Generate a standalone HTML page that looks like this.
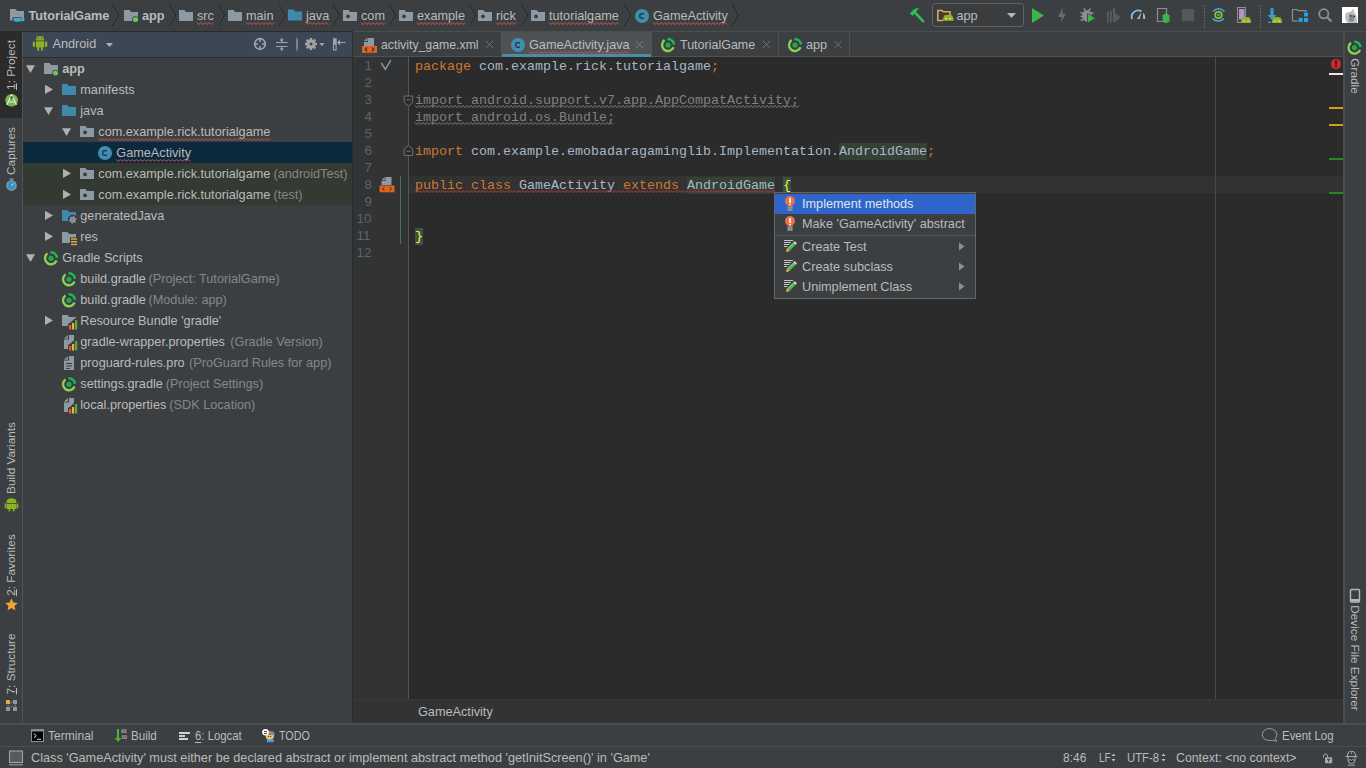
<!DOCTYPE html>
<html><head><meta charset="utf-8">
<style>
*{box-sizing:border-box;margin:0;padding:0}
html,body{width:1366px;height:768px;overflow:hidden;background:#3c3f41;font-family:"Liberation Sans",sans-serif;font-size:12.7px;color:#bbbbbb}
.a{position:absolute}
.t{position:absolute;white-space:pre}
#ic{position:absolute;left:0;top:0}
</style></head><body>
<div class="a" style="left:0px;top:0px;width:1366px;height:31px;background:#3c3f41;"></div>
<div class="a" style="left:0px;top:31px;width:353px;height:1px;background:#2b2b2b;"></div>
<div class="a" style="left:353px;top:31px;width:1013px;height:1px;background:#4b4d4f;"></div>
<div class="a" style="left:0px;top:32px;width:22px;height:691px;background:#3c3f41;"></div>
<div class="a" style="left:0px;top:32px;width:22px;height:86px;background:#2b2b2b;"></div>
<div class="a" style="left:22px;top:32px;width:1px;height:691px;background:#505254;"></div>
<div class="a" style="left:23px;top:32px;width:329px;height:25px;background:#3b4754;"></div>
<div class="a" style="left:23px;top:57px;width:329px;height:1px;background:#2b2b2b;"></div>
<div class="a" style="left:23px;top:58px;width:329px;height:665px;background:#3c3f41;"></div>
<div class="a" style="left:23px;top:142px;width:329px;height:21px;background:#0d293e;"></div>
<div class="a" style="left:23px;top:163px;width:329px;height:42px;background:#323a32;"></div>
<div class="a" style="left:352px;top:32px;width:1px;height:691px;background:#2b2b2b;"></div>
<div class="a" style="left:353px;top:32px;width:990px;height:24px;background:#3c3f41;"></div>
<div class="a" style="left:353px;top:56px;width:990px;height:1px;background:#515151;"></div>
<div class="a" style="left:353px;top:57px;width:990px;height:642px;background:#2b2b2b;"></div>
<div class="a" style="left:353px;top:57px;width:55px;height:642px;background:#313335;"></div>
<div class="a" style="left:408px;top:57px;width:1px;height:642px;background:#555555;"></div>
<div class="a" style="left:409px;top:176px;width:934px;height:17px;background:#323232;"></div>
<div class="a" style="left:1215px;top:57px;width:1px;height:642px;background:#4a4a4a;"></div>
<div class="a" style="left:353px;top:699px;width:990px;height:1px;background:#3a3a3a;"></div>
<div class="a" style="left:353px;top:700px;width:990px;height:23px;background:#313335;"></div>
<div class="a" style="left:1343px;top:32px;width:2px;height:691px;background:#4b4d4f;"></div>
<div class="a" style="left:1345px;top:32px;width:21px;height:691px;background:#3c3f41;"></div>
<div class="a" style="left:0px;top:723px;width:1366px;height:2px;background:#4b4d4f;"></div>
<div class="a" style="left:0px;top:725px;width:1366px;height:21px;background:#3c3f41;"></div>
<div class="a" style="left:0px;top:746px;width:1366px;height:1px;background:#4b4d4f;"></div>
<div class="a" style="left:0px;top:747px;width:1366px;height:21px;background:#3c3f41;"></div>
<div class="t" style="left:28.5px;top:6px;color:#bbbbbb;font-size:12.7px;font-weight:bold;line-height:21px;height:21px;">TutorialGame</div>
<div class="t" style="left:142px;top:6px;color:#bbbbbb;font-size:12.7px;font-weight:bold;line-height:21px;height:21px;">app</div>
<div class="t" style="left:197px;top:6px;color:#bbbbbb;font-size:12.7px;font-weight:normal;line-height:21px;height:21px;">src</div>
<div class="t" style="left:246px;top:6px;color:#bbbbbb;font-size:12.7px;font-weight:normal;line-height:21px;height:21px;">main</div>
<div class="t" style="left:306px;top:6px;color:#bbbbbb;font-size:12.7px;font-weight:normal;line-height:21px;height:21px;">java</div>
<div class="t" style="left:361px;top:6px;color:#bbbbbb;font-size:12.7px;font-weight:normal;line-height:21px;height:21px;">com</div>
<div class="t" style="left:417px;top:6px;color:#bbbbbb;font-size:12.7px;font-weight:normal;line-height:21px;height:21px;">example</div>
<div class="t" style="left:496px;top:6px;color:#bbbbbb;font-size:12.7px;font-weight:normal;line-height:21px;height:21px;">rick</div>
<div class="t" style="left:549px;top:6px;color:#bbbbbb;font-size:12.7px;font-weight:normal;line-height:21px;height:21px;">tutorialgame</div>
<div class="t" style="left:653px;top:6px;color:#bbbbbb;font-size:12.7px;font-weight:normal;line-height:21px;height:21px;">GameActivity</div>
<div class="a" style="left:932px;top:3px;width:92px;height:24px;background:#3a3c3e;border:1px solid #5e6062;border-radius:3px;"></div>
<div class="t" style="left:956.5px;top:6px;color:#bbbbbb;font-size:12.7px;font-weight:normal;line-height:21px;height:21px;">app</div>
<div class="a" style="left:1182px;top:9px;width:12px;height:12px;background:#555758;"></div>
<div class="a" style="left:1342px;top:7px;width:16px;height:16px;background:#ffffff;"></div>
<div class="t" style="left:52.5px;top:33.5px;color:#bbbbbb;font-size:12.7px;font-weight:normal;line-height:21px;height:21px;">Android</div>
<div class="t" style="left:62.3px;top:59px;color:#bbbbbb;font-size:12.7px;font-weight:bold;line-height:21px;height:21px;">app</div>
<div class="t" style="left:80.3px;top:80px;color:#bbbbbb;font-size:12.7px;font-weight:normal;line-height:21px;height:21px;">manifests</div>
<div class="t" style="left:80.3px;top:101px;color:#bbbbbb;font-size:12.7px;font-weight:normal;line-height:21px;height:21px;">java</div>
<div class="t" style="left:98.3px;top:122px;color:#bbbbbb;font-size:12.7px;font-weight:normal;line-height:21px;height:21px;">com.example.rick.tutorialgame</div>
<div class="t" style="left:116.3px;top:143px;color:#bbbbbb;font-size:12.7px;font-weight:normal;line-height:21px;height:21px;">GameActivity</div>
<div class="t" style="left:98.3px;top:164px;color:#bbbbbb;font-size:12.7px;font-weight:normal;line-height:21px;height:21px;">com.example.rick.tutorialgame</div>
<div class="t" style="left:273.5px;top:164px;color:#878787;font-size:12.7px;font-weight:normal;line-height:21px;height:21px;">(androidTest)</div>
<div class="t" style="left:98.3px;top:185px;color:#bbbbbb;font-size:12.7px;font-weight:normal;line-height:21px;height:21px;">com.example.rick.tutorialgame</div>
<div class="t" style="left:273.5px;top:185px;color:#878787;font-size:12.7px;font-weight:normal;line-height:21px;height:21px;">(test)</div>
<div class="t" style="left:80.3px;top:206px;color:#bbbbbb;font-size:12.7px;font-weight:normal;line-height:21px;height:21px;">generatedJava</div>
<div class="t" style="left:80.3px;top:227px;color:#bbbbbb;font-size:12.7px;font-weight:normal;line-height:21px;height:21px;">res</div>
<div class="t" style="left:62.3px;top:248px;color:#bbbbbb;font-size:12.7px;font-weight:normal;line-height:21px;height:21px;">Gradle Scripts</div>
<div class="t" style="left:80.3px;top:269px;color:#bbbbbb;font-size:12.7px;font-weight:normal;line-height:21px;height:21px;">build.gradle</div>
<div class="t" style="left:148.5px;top:269px;color:#878787;font-size:12.7px;font-weight:normal;line-height:21px;height:21px;">(Project: TutorialGame)</div>
<div class="t" style="left:80.3px;top:290px;color:#bbbbbb;font-size:12.7px;font-weight:normal;line-height:21px;height:21px;">build.gradle</div>
<div class="t" style="left:148.5px;top:290px;color:#878787;font-size:12.7px;font-weight:normal;line-height:21px;height:21px;">(Module: app)</div>
<div class="t" style="left:80.3px;top:311px;color:#bbbbbb;font-size:12.7px;font-weight:normal;line-height:21px;height:21px;">Resource Bundle 'gradle'</div>
<div class="t" style="left:80.3px;top:332px;color:#bbbbbb;font-size:12.7px;font-weight:normal;line-height:21px;height:21px;">gradle-wrapper.properties</div>
<div class="t" style="left:230.3px;top:332px;color:#878787;font-size:12.7px;font-weight:normal;line-height:21px;height:21px;">(Gradle Version)</div>
<div class="t" style="left:80.3px;top:353px;color:#bbbbbb;font-size:12.7px;font-weight:normal;line-height:21px;height:21px;">proguard-rules.pro</div>
<div class="t" style="left:189px;top:353px;color:#878787;font-size:12.7px;font-weight:normal;line-height:21px;height:21px;">(ProGuard Rules for app)</div>
<div class="t" style="left:80.3px;top:374px;color:#bbbbbb;font-size:12.7px;font-weight:normal;line-height:21px;height:21px;">settings.gradle</div>
<div class="t" style="left:165.8px;top:374px;color:#878787;font-size:12.7px;font-weight:normal;line-height:21px;height:21px;">(Project Settings)</div>
<div class="t" style="left:80.3px;top:395px;color:#bbbbbb;font-size:12.7px;font-weight:normal;line-height:21px;height:21px;">local.properties</div>
<div class="t" style="left:169.3px;top:395px;color:#878787;font-size:12.7px;font-weight:normal;line-height:21px;height:21px;">(SDK Location)</div>
<div class="a" style="left:502px;top:32px;width:149px;height:24px;background:#4e5254;"></div>
<div class="a" style="left:502px;top:54px;width:149px;height:3px;background:#4a8ba5;"></div>
<div class="a" style="left:501px;top:32px;width:1px;height:24px;background:#515151;"></div>
<div class="a" style="left:651px;top:32px;width:1px;height:24px;background:#515151;"></div>
<div class="a" style="left:778px;top:32px;width:1px;height:24px;background:#515151;"></div>
<div class="a" style="left:849px;top:32px;width:1px;height:24px;background:#515151;"></div>
<div class="t" style="left:380.5px;top:35px;color:#bbbbbb;font-size:12.7px;font-weight:normal;line-height:21px;height:21px;transform:scaleX(0.968);transform-origin:0 0;">activity_game.xml</div>
<div class="t" style="left:529px;top:35px;color:#bbbbbb;font-size:12.7px;font-weight:normal;line-height:21px;height:21px;">GameActivity.java</div>
<div class="t" style="left:679.5px;top:35px;color:#bbbbbb;font-size:12.7px;font-weight:normal;line-height:21px;height:21px;transform:scaleX(0.984);transform-origin:0 0;">TutorialGame</div>
<div class="t" style="left:806px;top:35px;color:#bbbbbb;font-size:12.7px;font-weight:normal;line-height:21px;height:21px;">app</div>
<div class="t" style="left:364.5px;top:57px;color:#606366;font-size:13.333px;font-weight:normal;line-height:17px;height:17px;font-family:"Liberation Mono",monospace;">1</div>
<div class="t" style="left:364.5px;top:74px;color:#606366;font-size:13.333px;font-weight:normal;line-height:17px;height:17px;font-family:"Liberation Mono",monospace;">2</div>
<div class="t" style="left:364.5px;top:91px;color:#606366;font-size:13.333px;font-weight:normal;line-height:17px;height:17px;font-family:"Liberation Mono",monospace;">3</div>
<div class="t" style="left:364.5px;top:108px;color:#606366;font-size:13.333px;font-weight:normal;line-height:17px;height:17px;font-family:"Liberation Mono",monospace;">4</div>
<div class="t" style="left:364.5px;top:125px;color:#606366;font-size:13.333px;font-weight:normal;line-height:17px;height:17px;font-family:"Liberation Mono",monospace;">5</div>
<div class="t" style="left:364.5px;top:142px;color:#606366;font-size:13.333px;font-weight:normal;line-height:17px;height:17px;font-family:"Liberation Mono",monospace;">6</div>
<div class="t" style="left:364.5px;top:159px;color:#606366;font-size:13.333px;font-weight:normal;line-height:17px;height:17px;font-family:"Liberation Mono",monospace;">7</div>
<div class="t" style="left:364.5px;top:176px;color:#606366;font-size:13.333px;font-weight:normal;line-height:17px;height:17px;font-family:"Liberation Mono",monospace;">8</div>
<div class="t" style="left:364.5px;top:193px;color:#606366;font-size:13.333px;font-weight:normal;line-height:17px;height:17px;font-family:"Liberation Mono",monospace;">9</div>
<div class="t" style="left:356.5px;top:210px;color:#606366;font-size:13.333px;font-weight:normal;line-height:17px;height:17px;font-family:"Liberation Mono",monospace;">10</div>
<div class="t" style="left:356.5px;top:227px;color:#606366;font-size:13.333px;font-weight:normal;line-height:17px;height:17px;font-family:"Liberation Mono",monospace;">11</div>
<div class="t" style="left:356.5px;top:244px;color:#606366;font-size:13.333px;font-weight:normal;line-height:17px;height:17px;font-family:"Liberation Mono",monospace;">12</div>
<div class="a" style="left:408px;top:57px;width:1px;height:642px;background:#555555;"></div>
<div class="a" style="left:399.5px;top:176px;width:1px;height:68px;background:#4b6f66;"></div>
<div class="t" style="left:415px;top:58px;font-family:'Liberation Mono',monospace;font-size:13.333px;line-height:17px;height:17px"><span style="color:#cc7832;">package </span><span style="color:#a9b7c6;">com.example.rick.tutorialgame</span><span style="color:#cc7832;">;</span></div>
<div class="t" style="left:415px;top:92px;font-family:'Liberation Mono',monospace;font-size:13.333px;line-height:17px;height:17px"><span style="color:#808080;">import android.support.v7.app.AppCompatActivity;</span></div>
<div class="t" style="left:415px;top:109px;font-family:'Liberation Mono',monospace;font-size:13.333px;line-height:17px;height:17px"><span style="color:#808080;">import android.os.Bundle;</span></div>
<div class="t" style="left:415px;top:143px;font-family:'Liberation Mono',monospace;font-size:13.333px;line-height:17px;height:17px"><span style="color:#cc7832;">import </span><span style="color:#a9b7c6;">com.example.emobadaragaminglib.Implementation.</span><span style="color:#a9b7c6;background:#344134;display:inline-block;height:17px">AndroidGame</span><span style="color:#cc7832;">;</span></div>
<div class="t" style="left:415px;top:177px;font-family:'Liberation Mono',monospace;font-size:13.333px;line-height:17px;height:17px"><span style="color:#cc7832;">public class </span><span style="color:#a9b7c6;">GameActivity </span><span style="color:#cc7832;">extends </span><span style="color:#a9b7c6;background:#344134;display:inline-block;height:17px">AndroidGame</span><span style="color:#a9b7c6;"> </span><span style="color:#ffef28;background:#3b514d;display:inline-block;height:17px">{</span></div>
<div class="t" style="left:415px;top:228px;font-family:'Liberation Mono',monospace;font-size:13.333px;line-height:17px;height:17px"><span style="color:#ffef28;background:#3b514d;display:inline-block;height:17px">}</span></div>
<div class="a" style="left:1329px;top:73px;width:14px;height:2px;background:#e8e8e8;"></div>
<div class="a" style="left:1329px;top:107px;width:14px;height:2px;background:#d69d1d;"></div>
<div class="a" style="left:1329px;top:124px;width:14px;height:2px;background:#d69d1d;"></div>
<div class="a" style="left:1329px;top:158px;width:14px;height:1.5px;background:#1f8a1f;"></div>
<div class="a" style="left:1329px;top:192px;width:14px;height:1.5px;background:#1f8a1f;"></div>
<div class="t" style="left:418px;top:702px;color:#bbbbbb;font-size:12.7px;font-weight:normal;line-height:21px;height:21px;">GameActivity</div>
<div class="t" style="left:11px;top:65.4px;line-height:14px;height:14px;font-size:11.8px;color:#bbbbbb;transform:translate(-50%,-50%) rotate(-90deg);"><u style="text-decoration-thickness:1px;text-underline-offset:1px">1</u>: Project</div>
<div class="t" style="left:11px;top:151.2px;line-height:14px;height:14px;font-size:11.8px;color:#bbbbbb;transform:translate(-50%,-50%) rotate(-90deg);">Captures</div>
<div class="t" style="left:11px;top:457.5px;line-height:14px;height:14px;font-size:11.8px;color:#bbbbbb;transform:translate(-50%,-50%) rotate(-90deg);">Build Variants</div>
<div class="t" style="left:11px;top:564.5px;line-height:14px;height:14px;font-size:11.8px;color:#bbbbbb;transform:translate(-50%,-50%) rotate(-90deg);"><u style="text-decoration-thickness:1px;text-underline-offset:1px">2</u>: Favorites</div>
<div class="t" style="left:11px;top:663.5px;line-height:14px;height:14px;font-size:11.8px;color:#bbbbbb;transform:translate(-50%,-50%) rotate(-90deg);"><u style="text-decoration-thickness:1px;text-underline-offset:1px">7</u>: Structure</div>
<div class="t" style="left:1355px;top:75.6px;line-height:14px;height:14px;font-size:11.8px;color:#bbbbbb;transform:translate(-50%,-50%) rotate(90deg);">Gradle</div>
<div class="t" style="left:1355px;top:657.5px;line-height:14px;height:14px;font-size:11.8px;color:#bbbbbb;transform:translate(-50%,-50%) rotate(90deg);">Device File Explorer</div>
<div class="t" style="left:48.3px;top:726px;color:#bbbbbb;font-size:12.7px;font-weight:normal;line-height:21px;height:21px;transform:scaleX(0.949);transform-origin:0 0;">Terminal</div>
<div class="t" style="left:131.3px;top:726px;color:#bbbbbb;font-size:12.7px;font-weight:normal;line-height:21px;height:21px;transform:scaleX(0.914);transform-origin:0 0;">Build</div>
<div class="t" style="left:195px;top:726px;color:#bbbbbb;font-size:12.7px;font-weight:normal;line-height:21px;height:21px;transform:scaleX(0.895);transform-origin:0 0;"><u style="text-decoration-thickness:1px;text-underline-offset:1.5px">6</u>: Logcat</div>
<div class="t" style="left:279px;top:726px;color:#bbbbbb;font-size:12.7px;font-weight:normal;line-height:21px;height:21px;transform:scaleX(0.843);transform-origin:0 0;">TODO</div>
<div class="t" style="left:1282px;top:726px;color:#bbbbbb;font-size:12.7px;font-weight:normal;line-height:21px;height:21px;transform:scaleX(0.903);transform-origin:0 0;">Event Log</div>
<div class="t" style="left:31px;top:748px;color:#bbbbbb;font-size:12.7px;font-weight:normal;line-height:21px;height:21px;">Class 'GameActivity' must either be declared abstract or implement abstract method 'getInitScreen()' in 'Game'</div>
<div class="t" style="left:1063px;top:748px;color:#bbbbbb;font-size:12.7px;font-weight:normal;line-height:21px;height:21px;transform:scaleX(0.943);transform-origin:0 0;">8:46</div>
<div class="t" style="left:1098.5px;top:748px;color:#bbbbbb;font-size:12.7px;font-weight:normal;line-height:21px;height:21px;transform:scaleX(0.78);transform-origin:0 0;">LF</div>
<div class="t" style="left:1127.3px;top:748px;color:#bbbbbb;font-size:12.7px;font-weight:normal;line-height:21px;height:21px;transform:scaleX(0.893);transform-origin:0 0;">UTF-8</div>
<div class="t" style="left:1175.5px;top:748px;color:#bbbbbb;font-size:12.7px;font-weight:normal;line-height:21px;height:21px;transform:scaleX(0.971);transform-origin:0 0;">Context: &lt;no context&gt;</div>
<div class="a" style="left:774px;top:192px;width:202px;height:107px;background:#3c3f41;border:1px solid #646667;"></div>
<div class="a" style="left:775px;top:194px;width:200px;height:20px;background:#2f65ca;"></div>
<div class="a" style="left:775px;top:235px;width:200px;height:1px;background:#555759;"></div>
<div class="t" style="left:802px;top:194px;color:#dfe6ee;font-size:12.7px;font-weight:normal;line-height:21px;height:21px;">Implement methods</div>
<div class="t" style="left:802px;top:214px;color:#bbbbbb;font-size:12.7px;font-weight:normal;line-height:21px;height:21px;">Make 'GameActivity' abstract</div>
<div class="t" style="left:802px;top:237px;color:#bbbbbb;font-size:12.7px;font-weight:normal;line-height:21px;height:21px;">Create Test</div>
<div class="t" style="left:802px;top:257px;color:#bbbbbb;font-size:12.7px;font-weight:normal;line-height:21px;height:21px;">Create subclass</div>
<div class="t" style="left:802px;top:277px;color:#bbbbbb;font-size:12.7px;font-weight:normal;line-height:21px;height:21px;">Unimplement Class</div>
<svg id="ic" width="1366" height="768" viewBox="0 0 1366 768"><path d="M10 9h5.5l1.5 2h7v9.5h-14z" fill="#8e9aa3"/>
<path d="M12.5 17.3h9.5v2.2q0 3 -3 3h-3.5q-3 0 -3 -3z" fill="#3c3f41"/><path d="M13.5 18h7.5v1.7q0 2 -2 2h-3.5q-2 0 -2 -2z" fill="#3fa7d6"/><path d="M21 18.6h2q1.2 0 1.2 1t-1.2 1h-2.5" fill="none" stroke="#3fa7d6" stroke-width="1.1"/>
<polyline points="111.2,4.5 117.7,15.25 111.2,26" fill="none" stroke="#4c4f51" stroke-width="1"/>
<polyline points="112,4.5 118.5,15.25 112,26" fill="none" stroke="#2a2c2d" stroke-width="1.3"/>
<path d="M124 10h5.5l1.5 2h7v9h-14z" fill="#8e9aa3"/>
<circle cx="135.5" cy="19.5" r="3.3" fill="#3c3f41"/><circle cx="135.5" cy="19.5" r="2.6" fill="#6ac45a"/>
<polyline points="168.2,4.5 174.7,15.25 168.2,26" fill="none" stroke="#4c4f51" stroke-width="1"/>
<polyline points="169,4.5 175.5,15.25 169,26" fill="none" stroke="#2a2c2d" stroke-width="1.3"/>
<path d="M179 10h5.5l1.5 2h7v9h-14z" fill="#8e9aa3"/>
<polyline points="197,22.5 199.0,24.5 201.0,22.5 203.0,24.5 205.0,22.5 207.0,24.5 209.0,22.5 211.0,24.5 213.0,22.5" fill="none" stroke="#d25252" stroke-width="1"/>
<polyline points="217.2,4.5 223.7,15.25 217.2,26" fill="none" stroke="#4c4f51" stroke-width="1"/>
<polyline points="218,4.5 224.5,15.25 218,26" fill="none" stroke="#2a2c2d" stroke-width="1.3"/>
<path d="M228 10h5.5l1.5 2h7v9h-14z" fill="#8e9aa3"/>
<polyline points="246,22.5 248.0,24.5 250.0,22.5 252.0,24.5 254.0,22.5 256.0,24.5 258.0,22.5 260.0,24.5 262.0,22.5 264.0,24.5 266.0,22.5 268.0,24.5 270.0,22.5 272.0,24.5 274.0,22.5" fill="none" stroke="#d25252" stroke-width="1"/>
<polyline points="277.7,4.5 284.2,15.25 277.7,26" fill="none" stroke="#4c4f51" stroke-width="1"/>
<polyline points="278.5,4.5 285.0,15.25 278.5,26" fill="none" stroke="#2a2c2d" stroke-width="1.3"/>
<path d="M288 9.5h5.5l1.5 2h7v9h-14z" fill="#3f8aa8"/>
<polyline points="306,22.5 308.0,24.5 310.0,22.5 312.0,24.5 314.0,22.5 316.0,24.5 318.0,22.5 320.0,24.5 322.0,22.5 324.0,24.5 326.0,22.5 328.0,24.5" fill="none" stroke="#d25252" stroke-width="1"/>
<polyline points="331.7,4.5 338.2,15.25 331.7,26" fill="none" stroke="#4c4f51" stroke-width="1"/>
<polyline points="332.5,4.5 339.0,15.25 332.5,26" fill="none" stroke="#2a2c2d" stroke-width="1.3"/>
<path d="M343 10h5.5l1.5 2h7v9h-14z" fill="#8e9aa3"/>
<circle cx="348" cy="16.4" r="1.9" fill="#3a3d3f"/>
<polyline points="361,22.5 363.0,24.5 365.0,22.5 367.0,24.5 369.0,22.5 371.0,24.5 373.0,22.5 375.0,24.5 377.0,22.5 379.0,24.5 381.0,22.5 383.0,24.5 385.0,22.5" fill="none" stroke="#d25252" stroke-width="1"/>
<polyline points="388.2,4.5 394.7,15.25 388.2,26" fill="none" stroke="#4c4f51" stroke-width="1"/>
<polyline points="389,4.5 395.5,15.25 389,26" fill="none" stroke="#2a2c2d" stroke-width="1.3"/>
<path d="M399 10h5.5l1.5 2h7v9h-14z" fill="#8e9aa3"/>
<circle cx="404" cy="16.4" r="1.9" fill="#3a3d3f"/>
<polyline points="417,22.5 419.0,24.5 421.0,22.5 423.0,24.5 425.0,22.5 427.0,24.5 429.0,22.5 431.0,24.5 433.0,22.5 435.0,24.5 437.0,22.5 439.0,24.5 441.0,22.5 443.0,24.5 445.0,22.5 447.0,24.5 449.0,22.5 451.0,24.5 453.0,22.5 455.0,24.5 457.0,22.5 459.0,24.5 461.0,22.5 463.0,24.5 465.0,22.5" fill="none" stroke="#d25252" stroke-width="1"/>
<polyline points="468.2,4.5 474.7,15.25 468.2,26" fill="none" stroke="#4c4f51" stroke-width="1"/>
<polyline points="469,4.5 475.5,15.25 469,26" fill="none" stroke="#2a2c2d" stroke-width="1.3"/>
<path d="M478 10h5.5l1.5 2h7v9h-14z" fill="#8e9aa3"/>
<circle cx="483" cy="16.4" r="1.9" fill="#3a3d3f"/>
<polyline points="496,22.5 498.0,24.5 500.0,22.5 502.0,24.5 504.0,22.5 506.0,24.5 508.0,22.5 510.0,24.5 512.0,22.5 514.0,24.5 516.0,22.5" fill="none" stroke="#d25252" stroke-width="1"/>
<polyline points="520.2,4.5 526.7,15.25 520.2,26" fill="none" stroke="#4c4f51" stroke-width="1"/>
<polyline points="521,4.5 527.5,15.25 521,26" fill="none" stroke="#2a2c2d" stroke-width="1.3"/>
<path d="M531 10h5.5l1.5 2h7v9h-14z" fill="#8e9aa3"/>
<circle cx="536" cy="16.4" r="1.9" fill="#3a3d3f"/>
<polyline points="549,22.5 551.0,24.5 553.0,22.5 555.0,24.5 557.0,22.5 559.0,24.5 561.0,22.5 563.0,24.5 565.0,22.5 567.0,24.5 569.0,22.5 571.0,24.5 573.0,22.5 575.0,24.5 577.0,22.5 579.0,24.5 581.0,22.5 583.0,24.5 585.0,22.5 587.0,24.5 589.0,22.5 591.0,24.5 593.0,22.5 595.0,24.5 597.0,22.5 599.0,24.5 601.0,22.5 603.0,24.5 605.0,22.5 607.0,24.5 609.0,22.5 611.0,24.5 613.0,22.5 615.0,24.5 617.0,22.5 619.0,24.5" fill="none" stroke="#d25252" stroke-width="1"/>
<polyline points="623.2,4.5 629.7,15.25 623.2,26" fill="none" stroke="#4c4f51" stroke-width="1"/>
<polyline points="624,4.5 630.5,15.25 624,26" fill="none" stroke="#2a2c2d" stroke-width="1.3"/>
<circle cx="642" cy="16" r="7" fill="#3d8fb0"/>
<path d="M644 13.8h-2.6q-1.6 0 -1.6 1.6v1.2q0 1.6 1.6 1.6h2.6" fill="none" stroke="#2b3a40" stroke-width="1.5"/>
<polyline points="653,22.5 655.0,24.5 657.0,22.5 659.0,24.5 661.0,22.5 663.0,24.5 665.0,22.5 667.0,24.5 669.0,22.5 671.0,24.5 673.0,22.5 675.0,24.5 677.0,22.5 679.0,24.5 681.0,22.5 683.0,24.5 685.0,22.5 687.0,24.5 689.0,22.5 691.0,24.5 693.0,22.5 695.0,24.5 697.0,22.5 699.0,24.5 701.0,22.5 703.0,24.5 705.0,22.5 707.0,24.5 709.0,22.5 711.0,24.5 713.0,22.5 715.0,24.5 717.0,22.5 719.0,24.5 721.0,22.5 723.0,24.5 725.0,22.5 727.0,24.5" fill="none" stroke="#d25252" stroke-width="1"/>
<polyline points="730.9000000000001,4.5 737.4000000000001,15.25 730.9000000000001,26" fill="none" stroke="#4c4f51" stroke-width="1"/>
<polyline points="731.7,4.5 738.2,15.25 731.7,26" fill="none" stroke="#2a2c2d" stroke-width="1.3"/>
<path d="M909.8 13.6l3.8 -3.9q2.5 -2 5.2 -1.7l-1.6 2.6 -4.5 5.2z" fill="#2fbf52"/><path d="M914.5 12.2l8.6 9" stroke="#2fbf52" stroke-width="2.6" stroke-linecap="round"/>
<path d="M937 10.5h5l1.3 1.3h6.7v4" fill="none" stroke="#e5a54a" stroke-width="1.6"/><path d="M937.8 10.5v10h5.2" fill="none" stroke="#e5a54a" stroke-width="1.6"/>
<path d="M943 20.8v-1.2q0 -4.8 5.25 -4.8t5.25 4.8v1.2z" fill="#97b324"/>
<circle cx="946.15" cy="18.8" r=".7" fill="#fff"/><circle cx="950.35" cy="18.8" r=".7" fill="#fff"/>
<path d="M944.5 14.8l1 1.6M952.0 14.8l-1 1.6" stroke="#97b324" stroke-width=".8"/>
<path d="M1007 13h9l-4.5 5z" fill="#b5b5b5"/>
<path d="M1032 8v15l12 -7.5z" fill="#3ab54a"/>
<path d="M1062.8 7.6l-4.8 9.4h3.6l-0.5 5.5 4.6 -8.8h-3.4z" fill="#6b6b6b"/>
<ellipse cx="1087" cy="16" rx="5" ry="5.8" fill="#8e8e8e"/><path d="M1083.5 8.5l2.3 2.5M1090.5 8.5l-2.3 2.5M1080.5 13h2.5M1080.5 16.5h2.5M1080.5 20h2.5M1091 13h2.5" stroke="#8e8e8e" stroke-width="1.4"/>
<path d="M1087.5 13.3v9.7l8 -4.85z" fill="#3ab54a" stroke="#3c3f41" stroke-width=".8"/>
<path d="M1107 12h1.8v10.5h-1.8zM1110 11h1.8v11.5h-1.8zM1113 8h2v14h-2z" fill="#5a5a5a"/><path d="M1114.8 12.5v9.5l5.8 -4.8z" fill="#5a5a5a"/>
<path d="M1132 19a6.5 6.5 0 0 1 9.5 -7.6" fill="none" stroke="#7fc4f0" stroke-width="1.8"/><path d="M1143 12.7a6.5 6.5 0 0 1 2 6.3h-1.8" fill="#b5b5b5"/><path d="M1137 19l4.5 -7 -1.8 7z" fill="#b5b5b5"/>
<path d="M1157.5 8.5h9v13h-9z" fill="none" stroke="#8e8e8e" stroke-width="1.2"/>
<path d="M1166 13.5q-3 0 -3 3.2v3q0 3.3 3 3.3t3 -3.3v-3q0 -3.2 -3 -3.2z" fill="#3ab54a"/><path d="M1162 16h8.2M1162 18.5h8.2M1162 21h8.2" stroke="#3ab54a" stroke-width="1"/>
<rect x="1203.9" y="5.5" width="1.2" height="1.2" fill="#777"/>
<rect x="1203.9" y="8.5" width="1.2" height="1.2" fill="#777"/>
<rect x="1203.9" y="11.5" width="1.2" height="1.2" fill="#777"/>
<rect x="1203.9" y="14.5" width="1.2" height="1.2" fill="#777"/>
<rect x="1203.9" y="17.5" width="1.2" height="1.2" fill="#777"/>
<rect x="1203.9" y="20.5" width="1.2" height="1.2" fill="#777"/>
<rect x="1203.9" y="23.5" width="1.2" height="1.2" fill="#777"/>
<rect x="1203.9" y="26.5" width="1.2" height="1.2" fill="#777"/>
<rect x="1259.9" y="5.5" width="1.2" height="1.2" fill="#777"/>
<rect x="1259.9" y="8.5" width="1.2" height="1.2" fill="#777"/>
<rect x="1259.9" y="11.5" width="1.2" height="1.2" fill="#777"/>
<rect x="1259.9" y="14.5" width="1.2" height="1.2" fill="#777"/>
<rect x="1259.9" y="17.5" width="1.2" height="1.2" fill="#777"/>
<rect x="1259.9" y="20.5" width="1.2" height="1.2" fill="#777"/>
<rect x="1259.9" y="23.5" width="1.2" height="1.2" fill="#777"/>
<rect x="1259.9" y="26.5" width="1.2" height="1.2" fill="#777"/>
<path d="M1213 11.5q5.5 -5.5 11.5 0" fill="none" stroke="#3bb0e6" stroke-width="1.6"/><path d="M1224 18.5q-5.5 5.5 -11.5 0" fill="none" stroke="#3bb0e6" stroke-width="1.6"/>
<circle cx="1218.5" cy="15" r="3.3" fill="none" stroke="#9cc629" stroke-width="1.6"/><circle cx="1218.5" cy="15" r="1.5" fill="#2fb070"/>
<path d="M1237.5 7.5h8v15h-8z" fill="none" stroke="#8e8e8e" stroke-width="1.1"/><rect x="1239" y="9" width="5.5" height="10.5" fill="#b791cc"/>
<path d="M1241 23v-1.2q0 -4.8 5.0 -4.8t5.0 4.8v1.2z" fill="#97b324"/>
<circle cx="1244.0" cy="21" r=".7" fill="#fff"/><circle cx="1248.0" cy="21" r=".7" fill="#fff"/>
<path d="M1242.5 17l1 1.6M1249.5 17l-1 1.6" stroke="#97b324" stroke-width=".8"/>
<path d="M1270.5 8h3v7h3l-4.5 5 -4.5 -5h3z" fill="#3c9bd4"/><path d="M1268 22.3h3" stroke="#3bb0e6" stroke-width="1.2"/>
<path d="M1272 23v-1.2q0 -4.8 5.0 -4.8t5.0 4.8v1.2z" fill="#97b324"/>
<circle cx="1275.0" cy="21" r=".7" fill="#fff"/><circle cx="1279.0" cy="21" r=".7" fill="#fff"/>
<path d="M1273.5 17l1 1.6M1280.5 17l-1 1.6" stroke="#97b324" stroke-width=".8"/>
<path d="M1292.5 21v-11.5h4.5l1.2 1.2h8v1.3" fill="none" stroke="#8e8e8e" stroke-width="1.2"/><path d="M1292.5 21h5" stroke="#8e8e8e" stroke-width="1.2"/>
<rect x="1304" y="12.5" width="4" height="4" fill="#1fa5e6"/><rect x="1298.5" y="18" width="4" height="4" fill="#1fa5e6"/><rect x="1304" y="18" width="4" height="4" fill="#1fa5e6"/>
<circle cx="1323.8" cy="13.8" r="4.6" fill="none" stroke="#8e8e8e" stroke-width="1.8"/><path d="M1327 17l4.5 4.5" stroke="#8e8e8e" stroke-width="2.2"/>
<path d="M1345.5 13.5q2 -2 5 -1.5l3 -3.5 .8 4q2.5 2.5 2.5 6v4.5h-9q-3.5 -2.5 -2.3 -9.5z" fill="#bdbdbd"/><path d="M1349 14.5q2.5 -1 5 1q1 3 -.5 5.5q-2.5 1.5 -4.5 0z" fill="#8a8a8a"/><circle cx="1350.8" cy="16" r=".8" fill="#222"/><circle cx="1354.2" cy="16.4" r=".8" fill="#222"/>
<path d="M35.9 40.6h8.3q0 -4.4 -4.15 -4.4t-4.15 4.4z" fill="#8cb21f"/>
<circle cx="38.3" cy="38.6" r=".6" fill="#3b4754"/><circle cx="41.8" cy="38.6" r=".6" fill="#3b4754"/>
<path d="M36.8 35.2l1 1.5M43.3 35.2l-1 1.5" stroke="#8cb21f" stroke-width=".9"/>
<rect x="35.9" y="41.3" width="8.3" height="6.2" fill="#8cb21f"/><rect x="32.8" y="41.5" width="2.2" height="5.5" rx="1" fill="#8cb21f"/><rect x="45" y="41.5" width="2.2" height="5.5" rx="1" fill="#8cb21f"/>
<rect x="37.2" y="47" width="1.9" height="3.7" rx=".8" fill="#8cb21f"/><rect x="41" y="47" width="1.9" height="3.7" rx=".8" fill="#8cb21f"/>
<path d="M106 43h7l-3.5 4z" fill="#b0b0b0"/>
<circle cx="260" cy="44" r="5.3" fill="none" stroke="#a3a3a3" stroke-width="1.7"/><path d="M260 39v3M260 46v3M255 44h3M262 44h3" stroke="#a3a3a3" stroke-width="1.6"/>
<path d="M276 42.5h11.5M276 46.5h11.5" stroke="#a3a3a3" stroke-width="1.1"/><path d="M281.7 38v3.2M281.7 47.8v3.2" stroke="#a3a3a3" stroke-width="1.1"/><path d="M279.5 39.5l2.2 2.5 2.2 -2.5zM279.5 49.5l2.2 -2.5 2.2 2.5z" fill="#a3a3a3"/>
<rect x="296.3" y="36.5" width="1.5" height="2.5" fill="#9a9a9a" opacity=".35"/><rect x="296.3" y="39" width="1.5" height="10.5" fill="#9a9a9a"/><rect x="296.3" y="49.5" width="1.5" height="2.5" fill="#9a9a9a" opacity=".35"/>
<g transform="translate(311 44)"><circle r="4.2" fill="#a3a3a3"/><circle r="1.5" fill="#3b4754"/><rect x="-1.3" y="-6" width="2.6" height="3" fill="#a3a3a3" transform="rotate(0)"/><rect x="-1.3" y="-6" width="2.6" height="3" fill="#a3a3a3" transform="rotate(45)"/><rect x="-1.3" y="-6" width="2.6" height="3" fill="#a3a3a3" transform="rotate(90)"/><rect x="-1.3" y="-6" width="2.6" height="3" fill="#a3a3a3" transform="rotate(135)"/><rect x="-1.3" y="-6" width="2.6" height="3" fill="#a3a3a3" transform="rotate(180)"/><rect x="-1.3" y="-6" width="2.6" height="3" fill="#a3a3a3" transform="rotate(225)"/><rect x="-1.3" y="-6" width="2.6" height="3" fill="#a3a3a3" transform="rotate(270)"/><rect x="-1.3" y="-6" width="2.6" height="3" fill="#a3a3a3" transform="rotate(315)"/></g>
<path d="M319.3 43h5.2l-2.6 3.3z" fill="#a3a3a3"/>
<rect x="333.5" y="38.8" width="2.6" height="11.2" fill="none" stroke="#a3a3a3" stroke-width="1.1"/><rect x="333.5" y="38.8" width="2.6" height="6" fill="#a3a3a3"/><path d="M338 42.5h7.5" stroke="#a3a3a3" stroke-width="1.1"/><path d="M337 42.5l3 -3v6z" fill="#a3a3a3"/>
<path d="M26 65.2h9l-4.5 7.8z" fill="#b0b0b0"/>
<path d="M44 63h5.5l1.5 2h7v9h-14z" fill="#8e9aa3"/>
<circle cx="55.5" cy="73" r="3.2" fill="#3c3f41"/><circle cx="55.5" cy="73" r="2.5" fill="#6ac45a"/>
<path d="M45 84.8v9.2l8 -4.6z" fill="#b0b0b0"/>
<path d="M62 84h5.5l1.5 2h7v9h-14z" fill="#3f8aa8"/>
<path d="M44 107.2h9l-4.5 7.8z" fill="#b0b0b0"/>
<path d="M62 105h5.5l1.5 2h7v9h-14z" fill="#3f8aa8"/>
<path d="M62 128.2h9l-4.5 7.8z" fill="#b0b0b0"/>
<path d="M80 126h5.5l1.5 2h7v9h-14z" fill="#8e9aa3"/>
<circle cx="85" cy="132.4" r="1.9" fill="#3a3d3f"/>
<polyline points="98.3,138.5 100.3,140.5 102.3,138.5 104.3,140.5 106.3,138.5 108.3,140.5 110.3,138.5 112.3,140.5 114.3,138.5 116.3,140.5 118.3,138.5 120.3,140.5 122.3,138.5 124.3,140.5 126.3,138.5 128.3,140.5 130.3,138.5 132.3,140.5 134.3,138.5 136.3,140.5 138.3,138.5 140.3,140.5 142.3,138.5 144.3,140.5 146.3,138.5 148.3,140.5 150.3,138.5 152.3,140.5 154.3,138.5 156.3,140.5 158.3,138.5 160.3,140.5 162.3,138.5 164.3,140.5 166.3,138.5 168.3,140.5 170.3,138.5 172.3,140.5 174.3,138.5 176.3,140.5 178.3,138.5 180.3,140.5 182.3,138.5 184.3,140.5 186.3,138.5 188.3,140.5 190.3,138.5 192.3,140.5 194.3,138.5 196.3,140.5 198.3,138.5 200.3,140.5 202.3,138.5 204.3,140.5 206.3,138.5 208.3,140.5 210.3,138.5 212.3,140.5 214.3,138.5 216.3,140.5 218.3,138.5 220.3,140.5 222.3,138.5 224.3,140.5 226.3,138.5 228.3,140.5 230.3,138.5 232.3,140.5 234.3,138.5 236.3,140.5 238.3,138.5 240.3,140.5 242.3,138.5 244.3,140.5 246.3,138.5 248.3,140.5 250.3,138.5 252.3,140.5 254.3,138.5 256.3,140.5 258.3,138.5 260.3,140.5 262.3,138.5 264.3,140.5 266.3,138.5 268.3,140.5 270.3,138.5" fill="none" stroke="#d25252" stroke-width="1"/>
<circle cx="105" cy="153" r="7" fill="#3d8fb0"/>
<path d="M107 150.8h-2.6q-1.6 0 -1.6 1.6v1.2q0 1.6 1.6 1.6h2.6" fill="none" stroke="#2b3a40" stroke-width="1.5"/>
<polyline points="116.3,159.5 118.3,161.5 120.3,159.5 122.3,161.5 124.3,159.5 126.3,161.5 128.3,159.5 130.3,161.5 132.3,159.5 134.3,161.5 136.3,159.5 138.3,161.5 140.3,159.5 142.3,161.5 144.3,159.5 146.3,161.5 148.3,159.5 150.3,161.5 152.3,159.5 154.3,161.5 156.3,159.5 158.3,161.5 160.3,159.5 162.3,161.5 164.3,159.5 166.3,161.5 168.3,159.5 170.3,161.5 172.3,159.5 174.3,161.5 176.3,159.5 178.3,161.5 180.3,159.5 182.3,161.5 184.3,159.5 186.3,161.5 188.3,159.5 190.3,161.5" fill="none" stroke="#d25252" stroke-width="1"/>
<path d="M63 168.8v9.2l8 -4.6z" fill="#b0b0b0"/>
<path d="M80 168h5.5l1.5 2h7v9h-14z" fill="#8e9aa3"/>
<circle cx="85" cy="174.4" r="1.9" fill="#3a3d3f"/>
<path d="M63 189.8v9.2l8 -4.6z" fill="#b0b0b0"/>
<path d="M80 189h5.5l1.5 2h7v9h-14z" fill="#8e9aa3"/>
<circle cx="85" cy="195.4" r="1.9" fill="#3a3d3f"/>
<path d="M45 210.8v9.2l8 -4.6z" fill="#b0b0b0"/>
<path d="M62 210h5.5l1.5 2h7v9h-14z" fill="#3f8aa8"/>
<circle cx="72.8" cy="219.8" r="5" fill="#3c3f41"/><path d="M72.8 219.8l0 -4q2.5 .5 2 3z" fill="#8e9aa3" transform="rotate(0 72.8 219.8)"/><path d="M72.8 219.8l0 -4q2.5 .5 2 3z" fill="#8e9aa3" transform="rotate(60 72.8 219.8)"/><path d="M72.8 219.8l0 -4q2.5 .5 2 3z" fill="#8e9aa3" transform="rotate(120 72.8 219.8)"/><path d="M72.8 219.8l0 -4q2.5 .5 2 3z" fill="#8e9aa3" transform="rotate(180 72.8 219.8)"/><path d="M72.8 219.8l0 -4q2.5 .5 2 3z" fill="#8e9aa3" transform="rotate(240 72.8 219.8)"/><path d="M72.8 219.8l0 -4q2.5 .5 2 3z" fill="#8e9aa3" transform="rotate(300 72.8 219.8)"/>
<path d="M45 231.8v9.2l8 -4.6z" fill="#b0b0b0"/>
<path d="M62 232h5.5l1.5 2h7v9h-14z" fill="#8e9aa3"/>
<rect x="70" y="237.5" width="7.5" height="7.5" fill="#3c3f41"/>
<rect x="71" y="238.3" width="6" height="1.5" fill="#e5a42a"/>
<rect x="71" y="241.0" width="6" height="1.5" fill="#e5a42a"/>
<rect x="71" y="243.70000000000002" width="6" height="1.5" fill="#e5a42a"/>
<path d="M26 254.2h9l-4.5 7.8z" fill="#b0b0b0"/>
<path d="M56.56 260.55A6 6 0 1 1 47.56 253.38000000000002" fill="none" stroke="#8bcf55" stroke-width="2.4"/>
<path d="M50.48 252.32000000000002A6 6 0 0 1 56.980000000000004 257.78000000000003" fill="none" stroke="#1db954" stroke-width="2.4"/>
<circle cx="51" cy="258.3" r="2.6" fill="#1eab50"/>
<path d="M74.56 281.55A6 6 0 1 1 65.56 274.38" fill="none" stroke="#8bcf55" stroke-width="2.4"/>
<path d="M68.48 273.32A6 6 0 0 1 74.98 278.78000000000003" fill="none" stroke="#1db954" stroke-width="2.4"/>
<circle cx="69" cy="279.3" r="2.6" fill="#1eab50"/>
<path d="M74.56 302.55A6 6 0 1 1 65.56 295.38" fill="none" stroke="#8bcf55" stroke-width="2.4"/>
<path d="M68.48 294.32A6 6 0 0 1 74.98 299.78000000000003" fill="none" stroke="#1db954" stroke-width="2.4"/>
<circle cx="69" cy="300.3" r="2.6" fill="#1eab50"/>
<path d="M45 315.8v9.2l8 -4.6z" fill="#b0b0b0"/>
<path d="M62 315h5.5l1.5 2h7v9h-14z" fill="#8e9aa3"/>
<path d="M68 330v-6l3 -2 3 -3 3 -1.5h3.2v12.5z" fill="#3c3f41"/>
<rect x="69" y="325" width="2.2" height="4.5" fill="#e35d22"/><rect x="72" y="323" width="2.2" height="6.5" fill="#eeb13c"/><rect x="75" y="320" width="2.2" height="9.5" fill="#56ac2f"/>
<path d="M64 339.5h5v-4.5h5v14h-10z" fill="#8e9aa3"/>
<path d="M64 338.8l3.8 -3.8v3.8z" fill="#8e9aa3"/>
<path d="M68 351v-6l3 -2 3 -3 3 -1.5h3.2v12.5z" fill="#3c3f41"/>
<rect x="69" y="346" width="2.2" height="4.5" fill="#e35d22"/><rect x="72" y="344" width="2.2" height="6.5" fill="#eeb13c"/><rect x="75" y="341" width="2.2" height="9.5" fill="#56ac2f"/>
<path d="M64 360.5h5v-4.5h5v14h-10z" fill="#8e9aa3"/>
<path d="M64 359.8l3.8 -3.8v3.8z" fill="#8e9aa3"/>
<path d="M66 363.5h6M66 366h6M66 368.5h4" stroke="#3c3f41" stroke-width="1"/>
<path d="M74.56 386.55A6 6 0 1 1 65.56 379.38" fill="none" stroke="#8bcf55" stroke-width="2.4"/>
<path d="M68.48 378.32A6 6 0 0 1 74.98 383.78000000000003" fill="none" stroke="#1db954" stroke-width="2.4"/>
<circle cx="69" cy="384.3" r="2.6" fill="#1eab50"/>
<path d="M64 402.5h5v-4.5h5v14h-10z" fill="#8e9aa3"/>
<path d="M64 401.8l3.8 -3.8v3.8z" fill="#8e9aa3"/>
<path d="M68 414v-6l3 -2 3 -3 3 -1.5h3.2v12.5z" fill="#3c3f41"/>
<rect x="69" y="409" width="2.2" height="4.5" fill="#e35d22"/><rect x="72" y="407" width="2.2" height="6.5" fill="#eeb13c"/><rect x="75" y="404" width="2.2" height="9.5" fill="#56ac2f"/>
<path d="M364 42.0h4v-4h6v8.5h-10z" fill="#8e9aa3"/><path d="M364 41.1l3.5 -3.5v3.5z" fill="#8e9aa3"/>
<rect x="362" y="46.0" width="15" height="6.8" fill="#e0641f"/>
<path d="M367.2 47.5l-2 1.9 2 1.9M371.8 47.5l2 1.9 -2 1.9" fill="none" stroke="#3c2a20" stroke-width="1.1"/>
<path d="M486 41l7 7M493 41l-7 7" stroke="#6f7274" stroke-width="1"/>
<circle cx="518" cy="45" r="7" fill="#3d8fb0"/>
<path d="M520 42.8h-2.6q-1.6 0 -1.6 1.6v1.2q0 1.6 1.6 1.6h2.6" fill="none" stroke="#2b3a40" stroke-width="1.5"/>
<polyline points="529,51.5 531.0,53.5 533.0,51.5 535.0,53.5 537.0,51.5 539.0,53.5 541.0,51.5 543.0,53.5 545.0,51.5 547.0,53.5 549.0,51.5 551.0,53.5 553.0,51.5 555.0,53.5 557.0,51.5 559.0,53.5 561.0,51.5 563.0,53.5 565.0,51.5 567.0,53.5 569.0,51.5 571.0,53.5 573.0,51.5 575.0,53.5 577.0,51.5 579.0,53.5 581.0,51.5 583.0,53.5 585.0,51.5 587.0,53.5 589.0,51.5 591.0,53.5 593.0,51.5 595.0,53.5 597.0,51.5 599.0,53.5 601.0,51.5 603.0,53.5 605.0,51.5 607.0,53.5 609.0,51.5 611.0,53.5 613.0,51.5 615.0,53.5 617.0,51.5 619.0,53.5 621.0,51.5 623.0,53.5 625.0,51.5 627.0,53.5 629.0,51.5" fill="none" stroke="#d25252" stroke-width="1"/>
<path d="M636 41l7 7M643 41l-7 7" stroke="#7a7d7f" stroke-width="1"/>
<path d="M673.56 47.25A6 6 0 1 1 664.56 40.08" fill="none" stroke="#8bcf55" stroke-width="2.4"/>
<path d="M667.48 39.019999999999996A6 6 0 0 1 673.98 44.48" fill="none" stroke="#1db954" stroke-width="2.4"/>
<circle cx="668" cy="45.0" r="2.6" fill="#1eab50"/>
<path d="M763 41l7 7M770 41l-7 7" stroke="#6f7274" stroke-width="1"/>
<path d="M800.56 47.25A6 6 0 1 1 791.56 40.08" fill="none" stroke="#8bcf55" stroke-width="2.4"/>
<path d="M794.48 39.019999999999996A6 6 0 0 1 800.98 44.48" fill="none" stroke="#1db954" stroke-width="2.4"/>
<circle cx="795" cy="45.0" r="2.6" fill="#1eab50"/>
<path d="M834.5 41l7 7M841.5 41l-7 7" stroke="#6f7274" stroke-width="1"/>
<path d="M381.3 62.8l4 6.6 5.6 -9.2" fill="none" stroke="#8a979f" stroke-width="1.5"/>
<path d="M404.2 96h8.5v6.5l-4.25 3.7 -4.25 -3.7z" fill="#2b2b2b" stroke="#6f7173" stroke-width="1"/><path d="M406.5 99.8h4" stroke="#6f7173" stroke-width="1"/>
<path d="M404.2 155.5h8.5v-6.5l-4.25 -3.7 -4.25 3.7z" fill="#2b2b2b" stroke="#6f7173" stroke-width="1"/><path d="M406.5 151.3h4" stroke="#6f7173" stroke-width="1"/>
<path d="M381.5 181h4v-4h6v8h-10z" fill="#8e9aa3"/><path d="M381.5 180.2l3.3 -3.3v3.3z" fill="#8e9aa3"/>
<rect x="379.5" y="185.5" width="15" height="6.8" fill="#e0641f"/><path d="M384.5 187.2l-2 1.7 2 1.7M389.5 187.2l2 1.7 -2 1.7" fill="none" stroke="#3c2a20" stroke-width="1"/>
<polyline points="415,105.5 417.0,107.5 419.0,105.5 421.0,107.5 423.0,105.5 425.0,107.5 427.0,105.5 429.0,107.5 431.0,105.5 433.0,107.5 435.0,105.5 437.0,107.5 439.0,105.5 441.0,107.5 443.0,105.5 445.0,107.5 447.0,105.5 449.0,107.5 451.0,105.5 453.0,107.5 455.0,105.5 457.0,107.5 459.0,105.5 461.0,107.5 463.0,105.5 465.0,107.5 467.0,105.5 469.0,107.5 471.0,105.5 473.0,107.5 475.0,105.5 477.0,107.5 479.0,105.5 481.0,107.5 483.0,105.5 485.0,107.5 487.0,105.5 489.0,107.5 491.0,105.5 493.0,107.5 495.0,105.5 497.0,107.5 499.0,105.5 501.0,107.5 503.0,105.5 505.0,107.5 507.0,105.5 509.0,107.5 511.0,105.5 513.0,107.5 515.0,105.5 517.0,107.5 519.0,105.5 521.0,107.5 523.0,105.5 525.0,107.5 527.0,105.5 529.0,107.5 531.0,105.5 533.0,107.5 535.0,105.5 537.0,107.5 539.0,105.5 541.0,107.5 543.0,105.5 545.0,107.5 547.0,105.5 549.0,107.5 551.0,105.5 553.0,107.5 555.0,105.5 557.0,107.5 559.0,105.5 561.0,107.5 563.0,105.5 565.0,107.5 567.0,105.5 569.0,107.5 571.0,105.5 573.0,107.5 575.0,105.5 577.0,107.5 579.0,105.5 581.0,107.5 583.0,105.5 585.0,107.5 587.0,105.5 589.0,107.5 591.0,105.5 593.0,107.5 595.0,105.5 597.0,107.5 599.0,105.5 601.0,107.5 603.0,105.5 605.0,107.5 607.0,105.5 609.0,107.5 611.0,105.5 613.0,107.5 615.0,105.5 617.0,107.5 619.0,105.5 621.0,107.5 623.0,105.5 625.0,107.5 627.0,105.5 629.0,107.5 631.0,105.5 633.0,107.5 635.0,105.5 637.0,107.5 639.0,105.5 641.0,107.5 643.0,105.5 645.0,107.5 647.0,105.5 649.0,107.5 651.0,105.5 653.0,107.5 655.0,105.5 657.0,107.5 659.0,105.5 661.0,107.5 663.0,105.5 665.0,107.5 667.0,105.5 669.0,107.5 671.0,105.5 673.0,107.5 675.0,105.5 677.0,107.5 679.0,105.5 681.0,107.5 683.0,105.5 685.0,107.5 687.0,105.5 689.0,107.5 691.0,105.5 693.0,107.5 695.0,105.5 697.0,107.5 699.0,105.5 701.0,107.5 703.0,105.5 705.0,107.5 707.0,105.5 709.0,107.5 711.0,105.5 713.0,107.5 715.0,105.5 717.0,107.5 719.0,105.5 721.0,107.5 723.0,105.5 725.0,107.5 727.0,105.5 729.0,107.5 731.0,105.5 733.0,107.5 735.0,105.5 737.0,107.5 739.0,105.5 741.0,107.5 743.0,105.5 745.0,107.5 747.0,105.5 749.0,107.5 751.0,105.5 753.0,107.5 755.0,105.5 757.0,107.5 759.0,105.5 761.0,107.5 763.0,105.5 765.0,107.5 767.0,105.5 769.0,107.5 771.0,105.5 773.0,107.5 775.0,105.5 777.0,107.5 779.0,105.5 781.0,107.5 783.0,105.5 785.0,107.5 787.0,105.5 789.0,107.5 791.0,105.5 793.0,107.5 795.0,105.5 797.0,107.5 799.0,105.5" fill="none" stroke="#808080" stroke-width="1"/>
<polyline points="415,122.5 417.0,124.5 419.0,122.5 421.0,124.5 423.0,122.5 425.0,124.5 427.0,122.5 429.0,124.5 431.0,122.5 433.0,124.5 435.0,122.5 437.0,124.5 439.0,122.5 441.0,124.5 443.0,122.5 445.0,124.5 447.0,122.5 449.0,124.5 451.0,122.5 453.0,124.5 455.0,122.5 457.0,124.5 459.0,122.5 461.0,124.5 463.0,122.5 465.0,124.5 467.0,122.5 469.0,124.5 471.0,122.5 473.0,124.5 475.0,122.5 477.0,124.5 479.0,122.5 481.0,124.5 483.0,122.5 485.0,124.5 487.0,122.5 489.0,124.5 491.0,122.5 493.0,124.5 495.0,122.5 497.0,124.5 499.0,122.5 501.0,124.5 503.0,122.5 505.0,124.5 507.0,122.5 509.0,124.5 511.0,122.5 513.0,124.5 515.0,122.5 517.0,124.5 519.0,122.5 521.0,124.5 523.0,122.5 525.0,124.5 527.0,122.5 529.0,124.5 531.0,122.5 533.0,124.5 535.0,122.5 537.0,124.5 539.0,122.5 541.0,124.5 543.0,122.5 545.0,124.5 547.0,122.5 549.0,124.5 551.0,122.5 553.0,124.5 555.0,122.5 557.0,124.5 559.0,122.5 561.0,124.5 563.0,122.5 565.0,124.5 567.0,122.5 569.0,124.5 571.0,122.5 573.0,124.5 575.0,122.5 577.0,124.5 579.0,122.5 581.0,124.5 583.0,122.5 585.0,124.5 587.0,122.5 589.0,124.5 591.0,122.5 593.0,124.5 595.0,122.5 597.0,124.5 599.0,122.5 601.0,124.5 603.0,122.5 605.0,124.5 607.0,122.5 609.0,124.5 611.0,122.5 613.0,124.5" fill="none" stroke="#808080" stroke-width="1"/>
<polyline points="415,190.5 417.0,192.5 419.0,190.5 421.0,192.5 423.0,190.5 425.0,192.5 427.0,190.5 429.0,192.5 431.0,190.5 433.0,192.5 435.0,190.5 437.0,192.5 439.0,190.5 441.0,192.5 443.0,190.5 445.0,192.5 447.0,190.5 449.0,192.5 451.0,190.5 453.0,192.5 455.0,190.5 457.0,192.5 459.0,190.5 461.0,192.5 463.0,190.5 465.0,192.5 467.0,190.5 469.0,192.5 471.0,190.5 473.0,192.5 475.0,190.5 477.0,192.5 479.0,190.5 481.0,192.5 483.0,190.5 485.0,192.5 487.0,190.5 489.0,192.5 491.0,190.5 493.0,192.5 495.0,190.5 497.0,192.5 499.0,190.5 501.0,192.5 503.0,190.5 505.0,192.5 507.0,190.5 509.0,192.5 511.0,190.5 513.0,192.5 515.0,190.5 517.0,192.5 519.0,190.5 521.0,192.5 523.0,190.5 525.0,192.5 527.0,190.5 529.0,192.5 531.0,190.5 533.0,192.5 535.0,190.5 537.0,192.5 539.0,190.5 541.0,192.5 543.0,190.5 545.0,192.5 547.0,190.5 549.0,192.5 551.0,190.5 553.0,192.5 555.0,190.5 557.0,192.5 559.0,190.5 561.0,192.5 563.0,190.5 565.0,192.5 567.0,190.5 569.0,192.5 571.0,190.5 573.0,192.5 575.0,190.5 577.0,192.5 579.0,190.5 581.0,192.5 583.0,190.5 585.0,192.5 587.0,190.5 589.0,192.5 591.0,190.5 593.0,192.5 595.0,190.5 597.0,192.5 599.0,190.5 601.0,192.5 603.0,190.5 605.0,192.5 607.0,190.5 609.0,192.5 611.0,190.5 613.0,192.5 615.0,190.5 617.0,192.5 619.0,190.5 621.0,192.5 623.0,190.5 625.0,192.5 627.0,190.5 629.0,192.5 631.0,190.5 633.0,192.5 635.0,190.5 637.0,192.5 639.0,190.5 641.0,192.5 643.0,190.5 645.0,192.5 647.0,190.5 649.0,192.5 651.0,190.5 653.0,192.5 655.0,190.5 657.0,192.5 659.0,190.5 661.0,192.5 663.0,190.5 665.0,192.5 667.0,190.5 669.0,192.5 671.0,190.5 673.0,192.5 675.0,190.5 677.0,192.5 679.0,190.5 681.0,192.5 683.0,190.5 685.0,192.5 687.0,190.5 689.0,192.5 691.0,190.5 693.0,192.5 695.0,190.5 697.0,192.5 699.0,190.5 701.0,192.5 703.0,190.5 705.0,192.5 707.0,190.5 709.0,192.5 711.0,190.5 713.0,192.5 715.0,190.5 717.0,192.5 719.0,190.5 721.0,192.5 723.0,190.5 725.0,192.5 727.0,190.5 729.0,192.5 731.0,190.5 733.0,192.5 735.0,190.5 737.0,192.5 739.0,190.5 741.0,192.5 743.0,190.5 745.0,192.5 747.0,190.5 749.0,192.5 751.0,190.5 753.0,192.5 755.0,190.5 757.0,192.5 759.0,190.5 761.0,192.5 763.0,190.5 765.0,192.5 767.0,190.5 769.0,192.5 771.0,190.5 773.0,192.5 775.0,190.5" fill="none" stroke="#b03a3a" stroke-width="1"/>
<circle cx="1336" cy="64" r="5.2" fill="#c42b2b"/><rect x="1335.2" y="60.3" width="1.6" height="4.6" fill="#3a1010"/><rect x="1335.2" y="65.8" width="1.6" height="1.6" fill="#3a1010"/>
<circle cx="11.6" cy="100.2" r="6.3" fill="#78b84a"/><path d="M11.6 94.5l-4.8 10.5M11.6 94.5l4.8 10.5M8 102h7.2" fill="none" stroke="#e8e8e8" stroke-width="1.2"/><circle cx="11.6" cy="97.5" r="1.5" fill="#5a6a5a"/>
<circle cx="11.5" cy="185.5" r="4.6" fill="#3592c4" stroke="#8e9aa3" stroke-width="1.4"/><path d="M11.5 185.5l2 -2" stroke="#dfe" stroke-width="1"/><path d="M9.5 179.2h4M11.5 179.2v1.7" stroke="#8e9aa3" stroke-width="1.2"/>
<path d="M6.5 503h10v-.6q0 -4.2 -5 -4.2t-5 4.2z" fill="#8cb21f"/><rect x="6.5" y="503.8" width="10" height="5.2" fill="#8cb21f"/><rect x="4.7" y="503.5" width="1.4" height="4.5" fill="#8cb21f"/><rect x="16.9" y="503.5" width="1.4" height="4.5" fill="#8cb21f"/><rect x="8.6" y="508.8" width="1.6" height="2.6" fill="#8cb21f"/><rect x="12.8" y="508.8" width="1.6" height="2.6" fill="#8cb21f"/>
<path d="M11.5 598.5l1.9 4 4.3 .5 -3.2 3 .9 4.3 -3.9 -2.2 -3.9 2.2 .9 -4.3 -3.2 -3 4.3 -.5z" fill="#f0a732"/>
<rect x="6" y="700" width="4" height="4" fill="#e9a93a"/><rect x="13" y="700" width="4" height="4" fill="#8e979e"/><rect x="6" y="707" width="4" height="4" fill="#8e979e"/><rect x="13" y="707" width="4" height="4" fill="#8e979e"/><path d="M10.5 703.5l2 -2M10.5 707.5l2 -2M8 704.5v2M15 704.5v2" stroke="#8e979e" stroke-width="1"/>
<path d="M1360.06 49.849999999999994A6 6 0 1 1 1351.06 42.67999999999999" fill="none" stroke="#8bcf55" stroke-width="2.4"/>
<path d="M1353.98 41.61999999999999A6 6 0 0 1 1360.48 47.07999999999999" fill="none" stroke="#1db954" stroke-width="2.4"/>
<circle cx="1354.5" cy="47.599999999999994" r="2.6" fill="#1eab50"/>
<rect x="1350.5" y="589.5" width="9" height="12.5" rx="1" fill="none" stroke="#b5b5b5" stroke-width="1.4"/><rect x="1351" y="599" width="8" height="2.5" fill="#b5b5b5"/>
<rect x="31" y="729" width="13" height="13" fill="#8a8d8f"/><rect x="32" y="731.5" width="11" height="9.5" fill="#000"/><path d="M33.8 733.5l2.5 2.2 -2.5 2.2M37 739.3h4" fill="none" stroke="#e0e0e0" stroke-width="1"/>
<rect x="117" y="729" width="2" height="9.5" fill="#4fb233"/><path d="M114.7 738h6.6l-3.3 4z" fill="#4fb233"/><text x="121" y="733.3" font-size="5.8" font-weight="bold" fill="#a8a8a8" font-family="Liberation Mono" textLength="6.2">01</text><text x="121" y="738.5" font-size="5.8" font-weight="bold" fill="#a8a8a8" font-family="Liberation Mono" textLength="6.2">10</text>
<rect x="179" y="732" width="11" height="2" fill="#d0d0d0"/><rect x="179" y="735" width="6" height="2" fill="#d0d0d0"/><rect x="179" y="738" width="9" height="2" fill="#d0d0d0"/>
<circle cx="269.8" cy="736" r="4.2" fill="#f4bb6e"/><path d="M265.8 735q0 -4 4.5 -4t4.5 4z" fill="#8a8a8a"/><rect x="266.8" y="739.5" width="7" height="2.7" fill="#3ba3e0"/><circle cx="268.5" cy="736.5" r=".6" fill="#333"/><circle cx="270.6" cy="736.5" r=".6" fill="#333"/>
<circle cx="265.5" cy="732.3" r="3.3" fill="#ffffff"/><path d="M264 731.5h3M264 733.5h3" stroke="#333" stroke-width=".9"/>
<path d="M1272.5 740.3q-1.2 .3 -3 .3a7.3 6 0 1 1 5.8 -2.3l1.6 2.9z" fill="none" stroke="#9a9a9a" stroke-width="1"/>
<rect x="9.5" y="751" width="13" height="11.5" fill="#595b5d" stroke="#a8a8a8" stroke-width="1"/><rect x="9" y="764.3" width="14" height="1" fill="#a8a8a8"/>
<path d="M1111.5 756l2 -2.5 2 2.5zM1111.5 759l2 2.5 2 -2.5z" fill="#bbbbbb"/>
<path d="M1161.5 756l2 -2.5 2 2.5zM1161.5 759l2 2.5 2 -2.5z" fill="#bbbbbb"/>
<path d="M1323.5 757.5v-1.5q0 -2 2 -2t2 2v1.5" fill="none" stroke="#a8a8a8" stroke-width="1"/><rect x="1325" y="757.3" width="7.2" height="6" rx="1" fill="#a8a8a8"/><path d="M1327 759.3h3.2M1328.6 759.3v2.6" stroke="#3c3f41" stroke-width="1"/>
<path d="M1347.5 756.5v-1.5q0 -3.8 4 -3.8t4 3.8v1.5M1345.5 756.5h12M1348 757v3.5q0 3 3.5 3t3.5 -3v-3.5M1348.5 760.5l2 -1 1 1 1 -1 2 1M1348 765.2h7" fill="none" stroke="#a8a8a8" stroke-width="1"/><path d="M1351.5 752.5v1.5" stroke="#a8a8a8" stroke-width="1"/>
<circle cx="790" cy="201" r="5" fill="#ec6f4b"/><path d="M787 204h6l-.6 2.3h-4.8z" fill="#e9604a"/>
<rect x="789.2" y="198" width="1.7" height="5" fill="#fff"/><rect x="789" y="204.2" width="2" height="1.1" fill="#fff"/>
<rect x="787.5" y="206.3" width="5" height="4.7" fill="#7e8a86"/><path d="M787.5 207.5h5M787.5 209.5h5" stroke="#9a9a88" stroke-width=".8"/>
<circle cx="790" cy="221" r="5" fill="#ec6f4b"/><path d="M787 224h6l-.6 2.3h-4.8z" fill="#e9604a"/>
<rect x="789.2" y="218" width="1.7" height="5" fill="#fff"/><rect x="789" y="224.2" width="2" height="1.1" fill="#fff"/>
<rect x="787.5" y="226.3" width="5" height="4.7" fill="#7e8a86"/><path d="M787.5 227.5h5M787.5 229.5h5" stroke="#9a9a88" stroke-width=".8"/>
<path d="M784 240.5h9M784 242.5h7M784 244.5h5.5M784 246.5h3.5" stroke="#c8c8c8" stroke-width="1"/>
<path d="M788.3 249.7l6.5 -6.3" stroke="#3c3f41" stroke-width="4.6"/>
<path d="M788.5 249.5l6.2 -6" stroke="#48b64c" stroke-width="3.4"/><path d="M787.6 248.9l6 -5.8" stroke="#8ee08e" stroke-width="1"/>
<path d="M794.5 243.6l1.3 -1.3" stroke="#d8d8d8" stroke-width="3.4"/>
<path d="M787.1 248.1l2.8 2.8 -3.9 1.1z" fill="#f3b05a"/>
<path d="M959 242.5v8l5.5 -4.0z" fill="#8f8f8f"/>
<path d="M784 260.5h9M784 262.5h7M784 264.5h5.5M784 266.5h3.5" stroke="#c8c8c8" stroke-width="1"/>
<path d="M788.3 269.7l6.5 -6.3" stroke="#3c3f41" stroke-width="4.6"/>
<path d="M788.5 269.5l6.2 -6" stroke="#48b64c" stroke-width="3.4"/><path d="M787.6 268.9l6 -5.8" stroke="#8ee08e" stroke-width="1"/>
<path d="M794.5 263.6l1.3 -1.3" stroke="#d8d8d8" stroke-width="3.4"/>
<path d="M787.1 268.1l2.8 2.8 -3.9 1.1z" fill="#f3b05a"/>
<path d="M959 262.5v8l5.5 -4.0z" fill="#8f8f8f"/>
<path d="M784 280.5h9M784 282.5h7M784 284.5h5.5M784 286.5h3.5" stroke="#c8c8c8" stroke-width="1"/>
<path d="M788.3 289.7l6.5 -6.3" stroke="#3c3f41" stroke-width="4.6"/>
<path d="M788.5 289.5l6.2 -6" stroke="#48b64c" stroke-width="3.4"/><path d="M787.6 288.9l6 -5.8" stroke="#8ee08e" stroke-width="1"/>
<path d="M794.5 283.6l1.3 -1.3" stroke="#d8d8d8" stroke-width="3.4"/>
<path d="M787.1 288.1l2.8 2.8 -3.9 1.1z" fill="#f3b05a"/>
<path d="M959 282.5v8l5.5 -4.0z" fill="#8f8f8f"/></svg>
</body></html>
